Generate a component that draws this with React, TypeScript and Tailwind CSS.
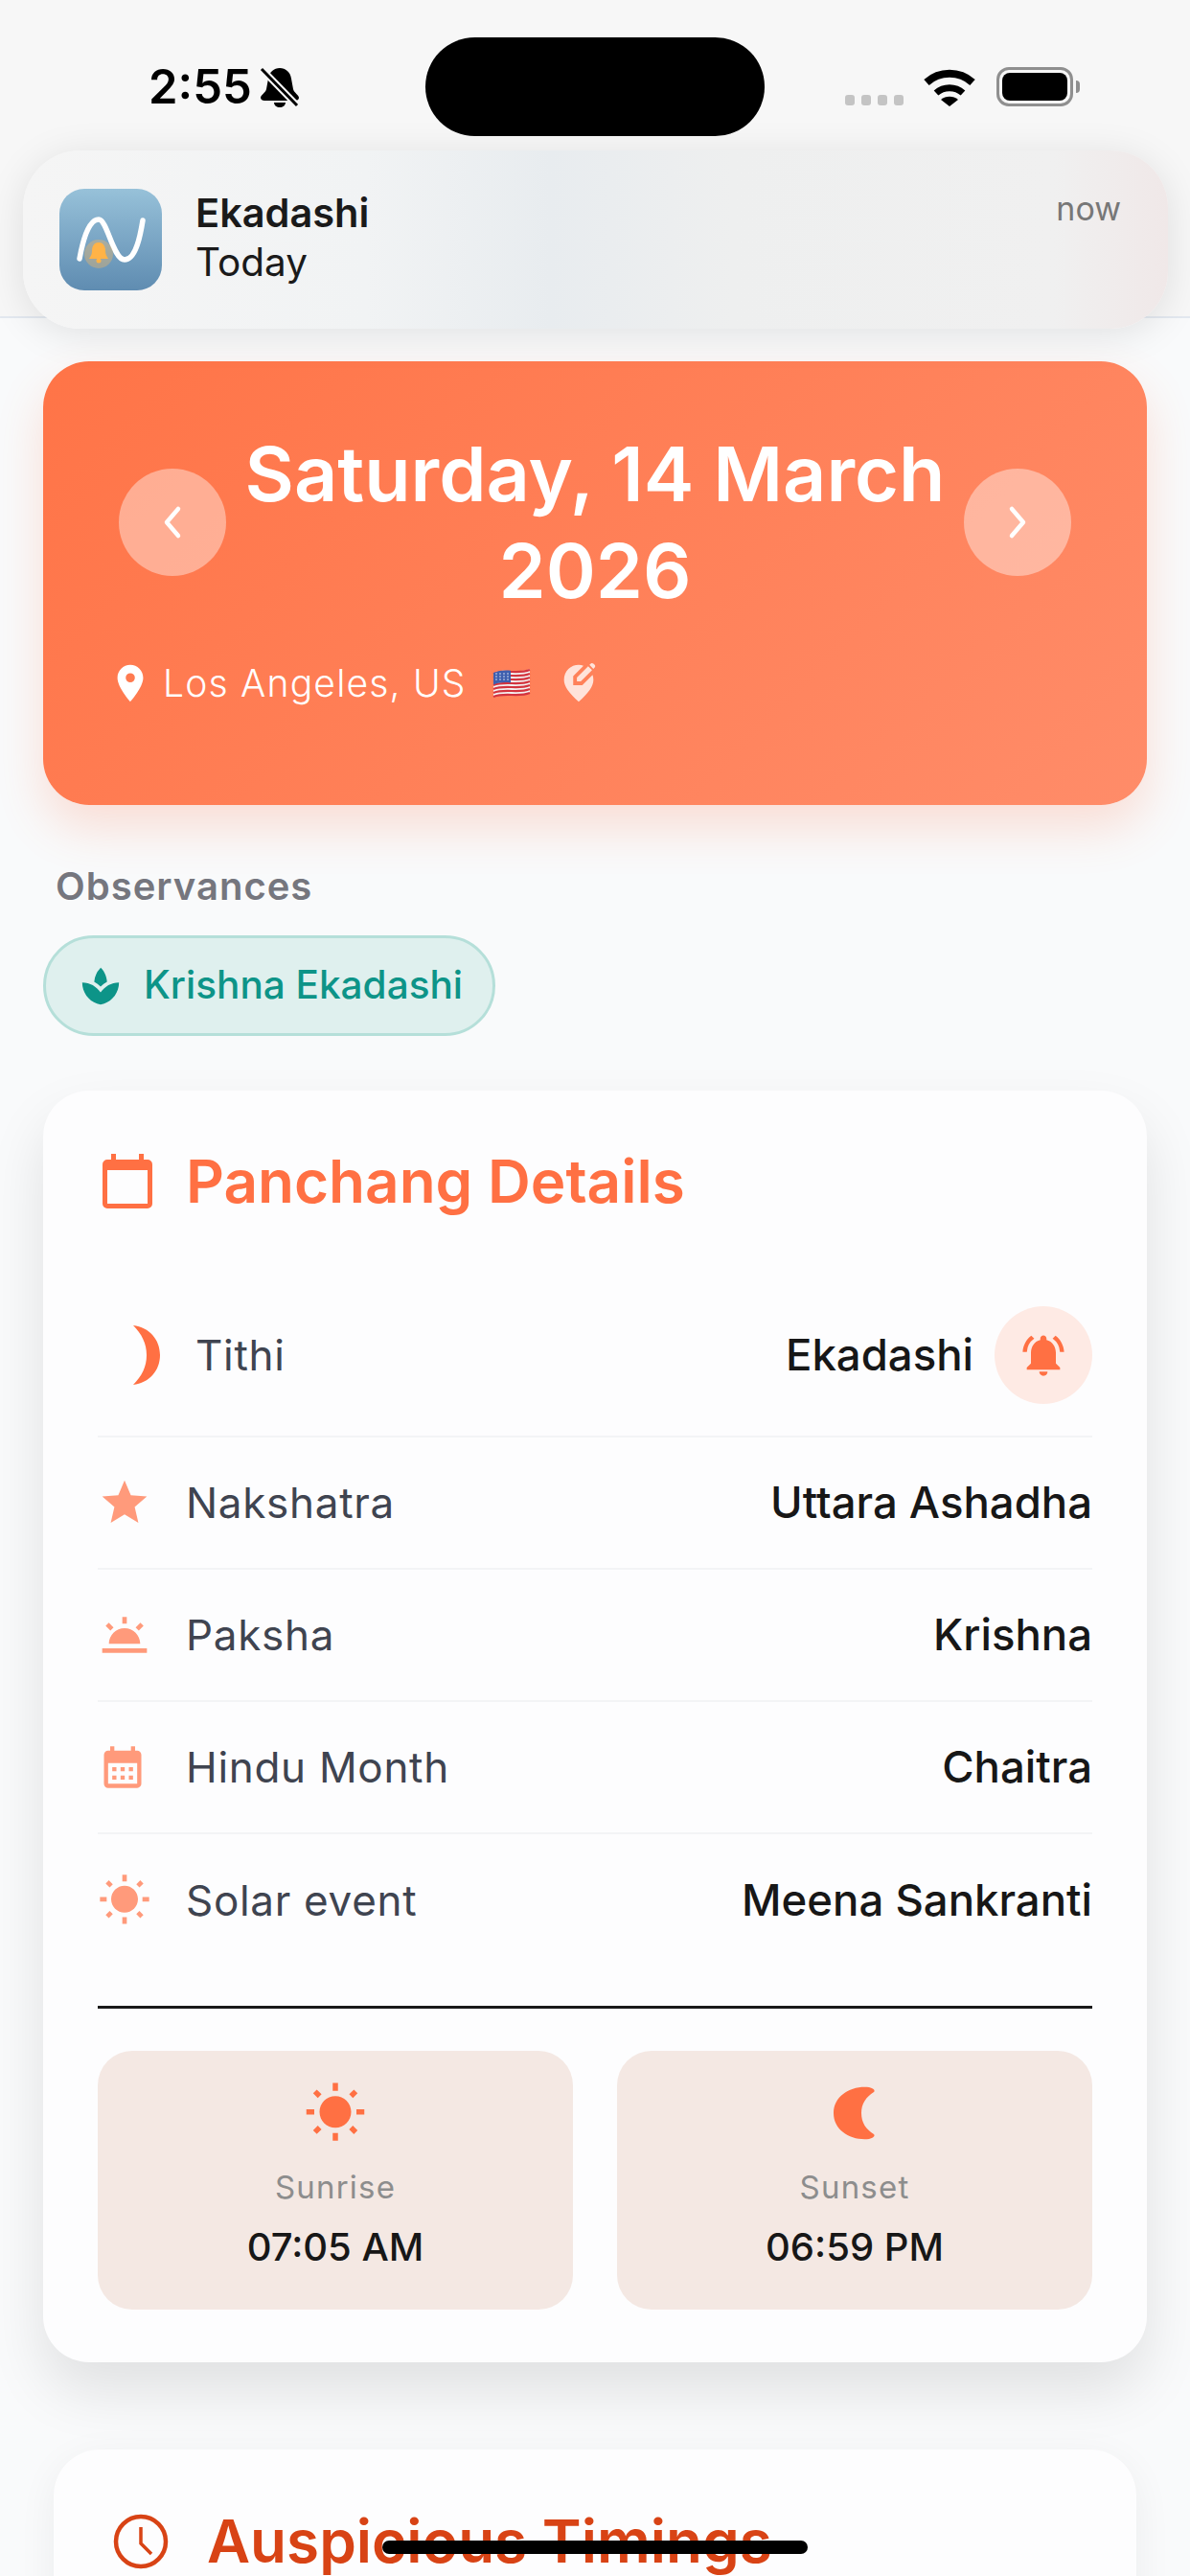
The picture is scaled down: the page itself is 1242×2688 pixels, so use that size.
import React from "react";
import {
  MdStar, MdWbTwilight, MdCalendarMonth, MdWbSunny, MdNotificationsActive,
  MdLocationOn, MdEditLocationAlt, MdSpa,
} from "react-icons/md";

const font = { fontFamily: "Inter, 'Noto Sans', sans-serif" };

function Flag() {
  const wave = (y: number) => `M1 ${y + 3}C13 ${y - 2} 27 ${y + 4} 39 ${y - 1}`;
  const ys = [3, 7, 11, 15, 19, 23, 27];
  return (
    <svg width="40" height="30" viewBox="0 0 40 30">
      <path d="M1 4C13 -1 27 5 39 0V25C27 30 13 24 1 29Z" fill="#f4f1f1" />
      {ys.map((y) => (
        <path key={y} d={wave(y - 1)} fill="none" stroke="#d3343f" strokeWidth="2.2" />
      ))}
      <path d="M1 4C7 1.500 13 1 19 1.800V14.500C13 13.500 7 14 1 16.500Z" fill="#3f5fae" />
      {[4, 8, 12, 16].map((x) =>
        [5, 8, 11].map((y) => <circle key={`${x}-${y}`} cx={x} cy={y} r="0.8" fill="#dfe6f5" />)
      )}
    </svg>
  );
}

function Chevron({ right }: { right?: boolean }) {
  return (
    <svg width="24" height="36" viewBox="0 0 24 36">
      <path d={right ? "M6 4 18 18 6 32" : "M18 4 6 18 18 32"} fill="none" stroke="#fff" strokeWidth="4.5" strokeLinecap="round" strokeLinejoin="round" />
    </svg>
  );
}

function Row({ icon, label, value, last }: { icon: React.ReactNode; label: string; value: string; last?: boolean }) {
  return (
    <div className={`flex h-[138px] items-center justify-between ${last ? "" : "border-b-2 border-[#f3f4f6]"}`}>
      <div className="flex items-center">
        <span className="flex w-[92px] items-center text-[#ff9a7b]">{icon}</span>
        <span className="text-[44px] tracking-[0.7px] text-[#3f4450]">{label}</span>
      </div>
      <span className="text-[45.5px] font-medium text-[#171717]">{value}</span>
    </div>
  );
}

function Tile({ icon, label, time }: { icon: React.ReactNode; label: string; time: string }) {
  return (
    <div className="flex h-[270px] flex-1 flex-col items-center rounded-[36px] bg-[#f4e8e3] pt-[30px]">
      <div className="flex h-[70px] items-center justify-center text-[#ff7043]">{icon}</div>
      <span className="mt-[18px] text-[33px] tracking-[1.2px] text-[#8d8d8d]">{label}</span>
      <span className="mt-[7px] text-[40px] font-medium text-[#171717]">{time}</span>
    </div>
  );
}

export default function App() {
  return (
    <div style={font} className="relative h-[2688px] w-[1242px] overflow-hidden bg-[#f9fafb]">
      <header className="h-[332px] border-b-2 border-[#e3e8f0] bg-[#f7f7f7]" />

      <main className="flex flex-col px-[45px]">
        <section className="mt-[45px] h-[463px] rounded-[48px] bg-[linear-gradient(135deg,#ff7447,#ff8c69)] px-[79px] pt-[67px] shadow-[0_24px_50px_rgba(255,112,67,0.2)]">
          <div className="flex items-center justify-between">
            <button className="flex h-[112px] w-[112px] shrink-0 items-center justify-center rounded-full bg-white/40">
              <Chevron />
            </button>
            <h1 className="text-center text-[79px] font-semibold leading-[101px] text-white">Saturday, 14 March 2026</h1>
            <button className="flex h-[112px] w-[112px] shrink-0 items-center justify-center rounded-full bg-white/40">
              <Chevron right />
            </button>
          </div>
          <div className="mt-[38px] flex items-center text-white">
            <MdLocationOn size={46} className="-ml-[11px]" />
            <span className="ml-[11px] text-[39px] font-light tracking-[1.2px]">Los Angeles, US</span>
            <span className="ml-[27px] flex"><Flag /></span>
            <MdEditLocationAlt size={46} className="ml-[27px] text-[#ffe3da]" />
          </div>
        </section>

        <h2 className="ml-[13px] mt-[55px] text-[40px] font-semibold tracking-[1px] text-[#75767e]">Observances</h2>
        <div className="mt-[21px] flex h-[105px] w-[472px] items-center rounded-full border-[3px] border-[#b5dfd9] bg-[#dff0ee] pl-[34px]">
          <MdSpa size={46} className="text-[#0d9488]" />
          <span className="ml-[22px] text-[40.5px] font-medium text-[#0d9488]">Krishna Ekadashi</span>
        </div>

        <section className="mt-[57px] h-[1327px] rounded-[48px] bg-[#fdfdfe] px-[57px] pt-[48px] shadow-[0_30px_60px_rgba(0,0,0,0.10)]">
          <div className="flex items-center">
            <svg width="52" height="57" viewBox="0 0 52 57" className="ml-[5px]">
              <path d="M9 0h5v6h24V0h5v6h4a5 5 0 0 1 5 5v41a5 5 0 0 1-5 5H5a5 5 0 0 1-5-5V11a5 5 0 0 1 5-5h4ZM5 17v35h42V17Z" fill="#ff7043" fillRule="evenodd" />
            </svg>
            <span className="ml-[35px] text-[62px] font-semibold text-[#ff7043]">Panchang Details</span>
          </div>
          <div className="mt-[51px]">
            <div className="flex h-[170px] items-center justify-between border-b-2 border-[#f3f4f6]">
              <div className="flex items-center">
                <svg width="30" height="62" viewBox="0 0 30 62" className="ml-[36px]">
                  <path d="M1 0C18 2 29 15 29 31C29 47 18 60 1 62C10 53 15 43 15 31C15 19 10 9 1 0Z" fill="#ff7043" />
                </svg>
                <span className="ml-[36px] text-[44px] tracking-[0.7px] text-[#3f4450]">Tithi</span>
              </div>
              <div className="flex items-center">
                <span className="text-[45.5px] font-medium text-[#171717]">Ekadashi</span>
                <span className="ml-[22px] flex h-[102px] w-[102px] items-center justify-center rounded-full bg-[#feeae4] text-[#ff7043]">
                  <MdNotificationsActive size={52} />
                </span>
              </div>
            </div>
            <Row icon={<MdStar size={56} />} label="Nakshatra" value="Uttara Ashadha" />
            <Row icon={<MdWbTwilight size={56} />} label="Paksha" value="Krishna" />
            <Row icon={<MdCalendarMonth size={52} />} label="Hindu Month" value="Chaitra" />
            <Row icon={<MdWbSunny size={56} />} label="Solar event" value="Meena Sankranti" last />
          </div>
          <div className="mt-[41px] h-[3px] bg-[#1a1a1a]" />
          <div className="mt-[44px] flex gap-[46px]">
            <Tile icon={<MdWbSunny size={66} />} label="Sunrise" time="07:05 AM" />
            <Tile
              icon={
                <svg width="44" height="56" viewBox="0 0 44 56">
                  <path d="M37 1C18 -1 0 10 0 28C0 46 18 57 37 55C41 54 44 52 42 50C34 45 29 38 29 28C29 18 34 11 42 6C44 4 41 2 37 1Z" fill="#ff7043" />
                </svg>
              }
              label="Sunset"
              time="06:59 PM"
            />
          </div>
        </section>

        <section className="mx-[11px] mt-[91px] h-[400px] rounded-[48px] bg-[#fdfdfe] px-[60px] pt-[49px] shadow-[0_10px_40px_rgba(0,0,0,0.06)]">
          <div className="flex items-center">
            <svg width="60" height="60" viewBox="0 0 60 60" className="ml-[1px]">
              <circle cx="30" cy="30" r="26" fill="none" stroke="#d84315" strokeWidth="4.5" />
              <path d="M30 15V32L41 43" fill="none" stroke="#d84315" strokeWidth="3.5" />
            </svg>
            <span className="ml-[39px] text-[62px] font-semibold text-[#d84315]">Auspicious Timings</span>
          </div>
        </section>
      </main>

      {/* status bar */}
      <div className="absolute left-[155px] top-[54px] flex items-center">
        <span className="text-[49px] font-semibold text-black">2:55</span>
        <svg width="42" height="44" viewBox="0 0 42 44" className="ml-[8px]">
          <path d="M21 2C27 2 32 6 33 13L35 24C36 28 41 30 41 33C41 35 39 36 37 36H5C3 36 1 35 1 33C1 30 6 28 7 24L9 13C10 6 15 2 21 2ZM15 38H27C27 41 24 43 21 43C18 43 15 41 15 38Z" fill="#000" />
          <path d="M2 3 39 41" stroke="#f7f7f7" strokeWidth="7" />
          <path d="M2 3 39 41" stroke="#000" strokeWidth="3" />
        </svg>
      </div>
      <div className="absolute left-[444px] top-[39px] h-[103px] w-[354px] rounded-full bg-black" />
      <div className="absolute left-[882px] top-[70px] flex h-[41px] items-end gap-[7px]">
        {[0, 1, 2, 3].map((i) => (
          <span key={i} className="mb-px h-[11px] w-[10px] rounded-[3px] bg-[#c4c4c4]" />
        ))}
        <svg width="56" height="41" viewBox="0 0 56 41" className="ml-[13px]">
          <path d="M4 16A36 36 0 0 1 52 16" fill="none" stroke="#000" strokeWidth="8" />
          <path d="M14 27A21 21 0 0 1 42 27" fill="none" stroke="#000" strokeWidth="7" />
          <path d="M19 34A14 14 0 0 1 37 34L28 41Z" fill="#000" />
        </svg>
        <span className="ml-[14px] flex h-[41px] w-[80px] items-center justify-center rounded-[13px] border-[3px] border-[#8f8f8f] p-[3px]">
          <span className="h-full w-full rounded-[8px] bg-black" />
        </span>
        <span className="-ml-[4px] mb-[14px] h-[13px] w-[4px] rounded-r-full bg-[#8f8f8f]" />
      </div>

      {/* notification */}
      <div className="absolute left-[24px] top-[157px] flex h-[186px] w-[1195px] rounded-[60px] bg-[linear-gradient(90deg,#f5f5f5_0%,#f1f3f4_30%,#e8ecef_46%,#eeefef_62%,#f0f0f0_90%,#f0e8e8_100%)] shadow-[0_6px_40px_rgba(0,0,0,0.10)]">
        <div className="ml-[38px] mt-[40px] h-[106px] w-[107px] overflow-hidden rounded-[26px] bg-gradient-to-b from-[#97c1d9] to-[#5f8cb1]">
          <svg width="107" height="106" viewBox="0 0 107 106">
            <path d="M21 73C26 45 33 32 41 32C50 32 56 74 68 74C79 74 84 52 87 33" fill="none" stroke="#fff" strokeWidth="5.500" strokeLinecap="round" />
            <circle cx="41" cy="68" r="15" fill="#ffb95f" opacity="0.35" />
            <path d="M41 56c-5 0-7 4-7 9 0 4-2 6-3 8h20c-1-2-3-4-3-8 0-5-2-9-7-9Z" fill="#ffb347" />
            <circle cx="41" cy="75" r="2.5" fill="#ffb347" />
          </svg>
        </div>
        <div className="ml-[35px] mt-[40px] flex flex-col">
          <span className="text-[41.5px] font-semibold leading-[51px] text-[#1a1a1a]">Ekadashi</span>
          <span className="text-[40.5px] leading-[51px] text-[#1a1a1a]">Today</span>
        </div>
        <span className="absolute right-[49px] top-[35px] text-[34px] text-[#777]">now</span>
      </div>

      {/* home indicator */}
      <div className="absolute left-[399px] top-[2651px] h-[14px] w-[444px] rounded-full bg-black" />
    </div>
  );
}
